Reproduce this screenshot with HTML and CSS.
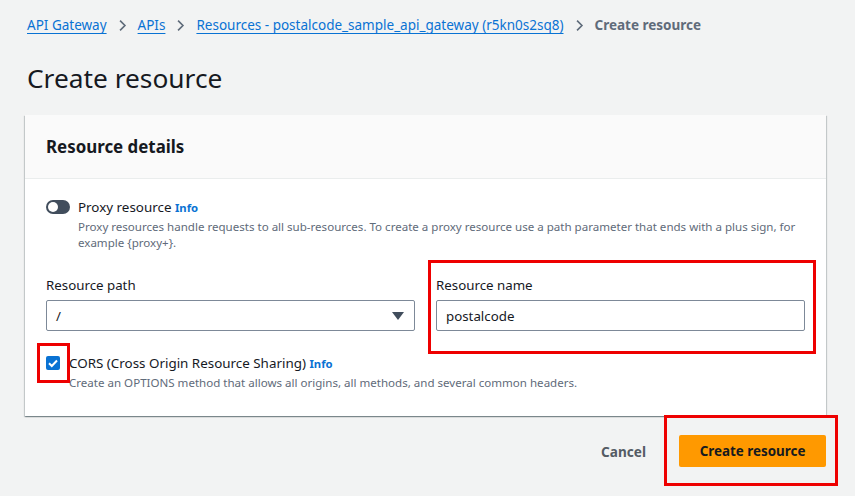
FILE: index.html
```html
<!DOCTYPE html>
<html>
<head>
<meta charset="utf-8">
<link rel="stylesheet" href="styles.css">
</head>
<body>
<div class="page">
  <nav class="crumbs">
    <a class="crumb-link">API Gateway</a>
    <svg class="chev" viewBox="0 0 16 16"><path d="M5 2l6 6-6 6" fill="none" stroke="#5f6b7a" stroke-width="2"/></svg>
    <a class="crumb-link">APIs</a>
    <svg class="chev" viewBox="0 0 16 16"><path d="M5 2l6 6-6 6" fill="none" stroke="#5f6b7a" stroke-width="2"/></svg>
    <a class="crumb-link">Resources - postalcode_sample_api_gateway (r5kn0s2sq8)</a>
    <svg class="chev" viewBox="0 0 16 16"><path d="M5 2l6 6-6 6" fill="none" stroke="#5f6b7a" stroke-width="2"/></svg>
    <span class="crumb-current">Create resource</span>
  </nav>
  <h1 class="title">Create resource</h1>
  <section class="card">
    <div class="card-head">Resource details</div>
    <div class="card-body">
      <div class="toggle-row">
        <span class="toggle"><span class="knob"></span></span>
        <div class="toggle-text">
          <div class="label">Proxy resource <span class="info">Info</span></div>
          <div class="desc">Proxy resources handle requests to all sub-resources. To create a proxy resource use a path parameter that ends with a plus sign, for example {proxy+}.</div>
        </div>
      </div>
      <div class="fields">
        <div class="field">
          <div class="field-label">Resource path</div>
          <div class="select">
            <span>/</span>
            <svg class="caret" viewBox="0 0 12 8"><path d="M0 0h12L6 8z" fill="#414d5c"/></svg>
          </div>
        </div>
        <div class="field">
          <div class="field-label">Resource name</div>
          <div class="input">postalcode</div>
          <div class="mark mark-name"></div>
        </div>
      </div>
      <div class="check-row">
        <span class="checkbox">
          <svg viewBox="0 0 14 14"><path d="M3 7.2l2.8 2.8L11 4.5" fill="none" stroke="#fff" stroke-width="2"/></svg>
          <span class="mark mark-check"></span>
        </span>
        <div class="toggle-text">
          <div class="label">CORS (Cross Origin Resource Sharing) <span class="info">Info</span></div>
          <div class="desc">Create an OPTIONS method that allows all origins, all methods, and several common headers.</div>
        </div>
      </div>
    </div>
  </section>
  <div class="actions">
    <button class="btn-link">Cancel</button>
    <span class="annotated">
      <button class="btn-primary">Create resource</button>
      <span class="mark mark-btn"></span>
    </span>
  </div>
</div>
</body>
</html>
```

FILE: styles.css
```css
* { box-sizing: border-box; }
html, body { margin: 0; background: #f2f3f3; }
body { font-family: "Noto Sans", "Open Sans", sans-serif; color: #16191f; width: 855px; height: 496px; overflow: hidden; }
.page { padding: 14px 29px 0 25px; }
.crumbs { display: flex; align-items: center; gap: 9px; font-size: 13.5px; line-height: 22px; padding-left: 2px; }
.crumb-link { color: #0972d3; text-decoration: underline; text-underline-offset: 3px; }
.crumb-current { color: #5f6b7a; font-weight: 700; }
.chev { width: 13px; height: 13px; }
.title { font-size: 26.3px; font-weight: 400; margin: 24px 0 0 2px; line-height: 36px; color: #16191f; }
.card { margin-top: 19px; background: #fff; box-shadow: 0 1px 1px 0 rgba(0,28,36,0.3), 1px 1px 1px 0 rgba(0,28,36,0.15), -1px 1px 1px 0 rgba(0,28,36,0.15); width: 801px; }
.card-head { background: #fafafa; height: 64px; padding: 0 21px; display: flex; align-items: center; font-size: 16.9px; font-weight: 700; border-bottom: 1px solid #eaeded; }
.card-body { padding: 20px 21px 25px; }
.toggle-row, .check-row { display: flex; align-items: flex-start; }
.toggle { width: 24px; height: 14px; border-radius: 8px; background: #414d5c; position: relative; margin-top: 1px; flex: none; }
.knob { position: absolute; left: 2px; top: 2px; width: 10px; height: 10px; border-radius: 50%; background: #fff; }
.toggle-text { margin-left: 8px; }
.label { font-size: 13.4px; line-height: 16px; }
.info { color: #0972d3; font-weight: 700; font-size: 11.3px; }
.desc { font-size: 11.55px; color: #5f6b7a; line-height: 16px; margin-top: 3px; }
.fields { display: grid; grid-template-columns: 369px 369px; gap: 21px; margin-top: 24px; }
.field { position: relative; }
.field-label { font-size: 13.3px; line-height: 20px; margin-bottom: 5px; }
.select, .input { height: 31px; border: 1px solid #7d8998; border-radius: 2px; display: flex; align-items: center; padding: 0 9px; font-size: 13.3px; background: #fff; }
.select { justify-content: space-between; }
.caret { width: 12px; height: 8px; margin-right: 1px; }
.check-row { margin-top: 25px; }
.checkbox { width: 14px; height: 14px; border-radius: 2px; background: #0972d3; position: relative; flex: none; }
.checkbox svg { width: 14px; height: 14px; display: block; }
.check-row .toggle-text { margin-left: 9px; margin-top: -1px; }
.actions { display: flex; justify-content: flex-end; align-items: center; gap: 33px; margin-top: 19px; width: 801px; }
.btn-link { background: none; border: none; font-family: inherit; font-size: 13.6px; font-weight: 700; color: #545b64; padding: 0; }
.btn-primary { background: #ff9900; border: none; border-radius: 2px; font-family: inherit; font-weight: 700; font-size: 13.4px; color: #16191f; width: 147px; height: 32px; padding: 0; display: block; }
.annotated { position: relative; }
.mark { position: absolute; border: 3px solid #ee0000; pointer-events: none; }
.mark-name { left: -8px; top: -15px; width: 388px; height: 94px; }
.mark-check { left: -9px; top: -13px; width: 33px; height: 40px; }
.mark-btn { left: -15px; top: -20px; width: 174px; height: 71px; }
```
